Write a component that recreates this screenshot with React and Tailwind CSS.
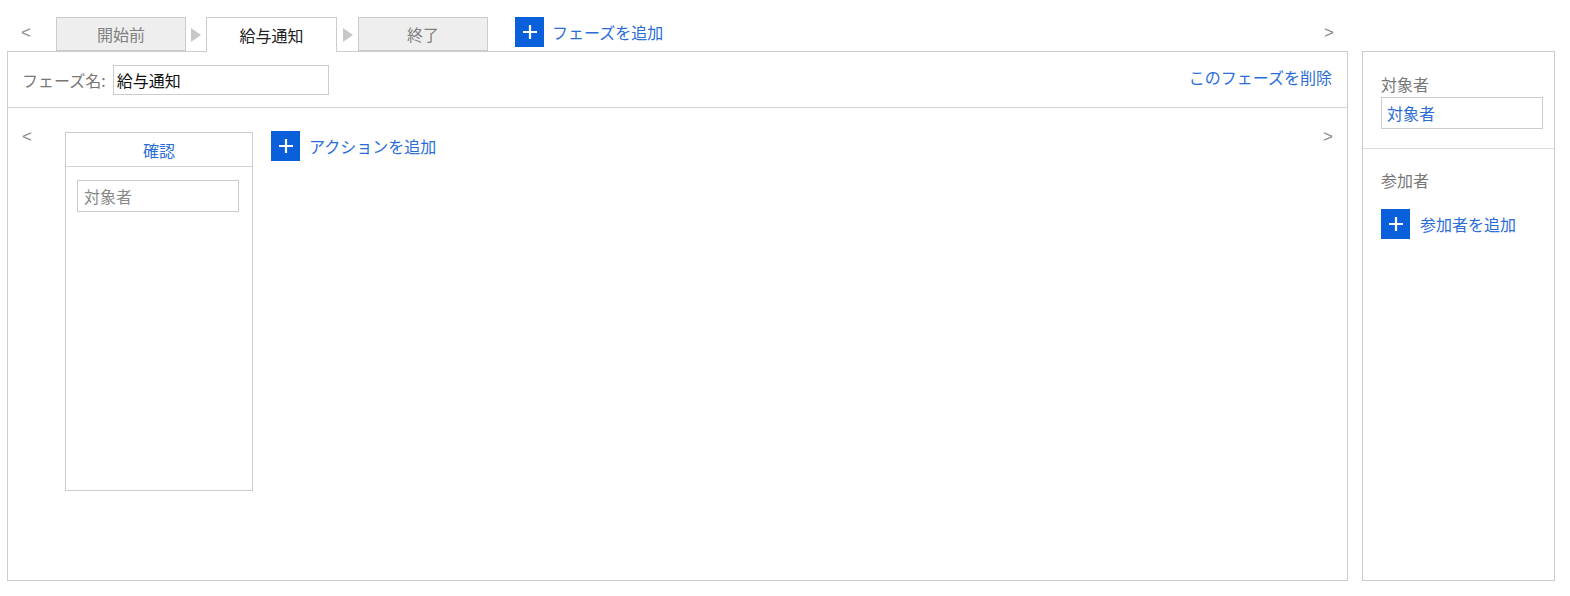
import React from "react";

const font = { fontFamily: '"Noto Sans CJK JP", "Noto Sans", sans-serif' };
const arrowFont = { fontFamily: '"Liberation Sans", Arial, sans-serif' };

function PlusBtn() {
  return (
    <div className="w-[29px] h-[30px] bg-[#0a60da] flex items-center justify-center shrink-0">
      <svg width="16" height="16" viewBox="0 0 16 16">
        <path d="M8 1v14M1 8h14" stroke="#fff" strokeWidth="2.2" />
      </svg>
    </div>
  );
}

function Tri({ w }) {
  return (
    <div className={`${w} flex justify-center items-center h-[33px]`}>
      <svg width="10" height="14" viewBox="0 0 10 14">
        <path d="M0 0L10 7L0 14Z" fill="#c8c8c8" />
      </svg>
    </div>
  );
}

export default function App() {
  return (
    <div className="bg-white w-[1570px] h-[596px] text-[16px] leading-none" style={font}>
      <div className="flex pl-[7px] pt-[17px]">
        {/* left column */}
        <div className="w-[1341px] flex flex-col">
          {/* tab bar */}
          <div className="h-[34px] flex items-end relative z-10">
            <div className="w-[49px] h-[34px] flex items-center pl-[14px] pb-[4px] text-[#888] text-[17px]" style={arrowFont}>&lt;</div>
            <div className="w-[130px] h-[34px] border border-[#cccccc] bg-[#eeeeee] flex items-center justify-center text-[#808080]">開始前</div>
            <Tri w="w-[20px]" />
            <div className="w-[131px] h-[35px] mb-[-1px] border border-b-0 border-[#cccccc] bg-white flex items-center justify-center text-[#222] pb-[1px]">給与通知</div>
            <Tri w="w-[21px]" />
            <div className="w-[130px] h-[34px] border border-[#cccccc] bg-[#eeeeee] flex items-center justify-center text-[#808080]">終了</div>
            <div className="flex items-center self-start ml-[27px] mt-0">
              <PlusBtn />
              <span className="ml-[8px] text-[#2a6dd9]">フェーズを追加</span>
            </div>
            <div className="ml-auto mr-[14px] h-[34px] flex items-center text-[#888] text-[17px] pb-[4px]" style={arrowFont}>&gt;</div>
          </div>
          {/* main panel */}
          <div className="h-[530px] border border-[#cccccc] flex flex-col">
            <div className="h-[56px] border-b border-[#d4d4d4] flex items-start pl-[14px] pr-[15px] pt-[13px]">
              <span className="text-[#777] mt-[7px]">フェーズ名:</span>
              <div className="ml-[7px] w-[216px] h-[30px] border border-[#cccccc] flex items-center pl-[3px] text-[#111]">給与通知</div>
              <span className="ml-auto text-[#2a6dd9] mt-[4px]">このフェーズを削除</span>
            </div>
            <div className="flex pt-[20px]">
              <div className="w-[57px] pl-[14px] text-[#888] text-[17px] leading-none" style={arrowFont}>&lt;</div>
              <div className="w-[188px] h-[359px] mt-[4px] border border-[#cccccc] flex flex-col">
                <div className="h-[34px] border-b border-[#d4d4d4] flex items-center justify-center text-[#2a6dd9]">確認</div>
                <div className="pt-[13px] pl-[11px]">
                  <div className="w-[162px] h-[32px] border border-[#cccccc] flex items-center pl-[6px] text-[#888]">対象者</div>
                </div>
              </div>
              <div className="flex items-center ml-[18px] self-start mt-[3px]">
                <PlusBtn />
                <span className="ml-[9px] text-[#2a6dd9]">アクションを追加</span>
              </div>
              <div className="ml-auto mr-[14px] text-[#888] text-[17px] leading-none" style={arrowFont}>&gt;</div>
            </div>
          </div>
        </div>
        {/* right panel */}
        <div className="ml-[14px] mt-[34px] w-[193px] h-[530px] border border-[#cccccc] flex flex-col">
          <div className="h-[97px] border-b border-[#dddddd] pl-[18px] pr-[11px] pt-[24px]">
            <div className="text-[#777]">対象者</div>
            <div className="mt-[5px] w-[162px] h-[32px] border border-[#cccccc] flex items-center pl-[5px] text-[#2a6dd9]">対象者</div>
          </div>
          <div className="pl-[18px] pt-[23px]">
            <div className="text-[#777]">参加者</div>
            <div className="flex items-center mt-[21px]">
              <PlusBtn />
              <span className="ml-[10px] text-[#2a6dd9]">参加者を追加</span>
            </div>
          </div>
        </div>
      </div>
    </div>
  );
}
